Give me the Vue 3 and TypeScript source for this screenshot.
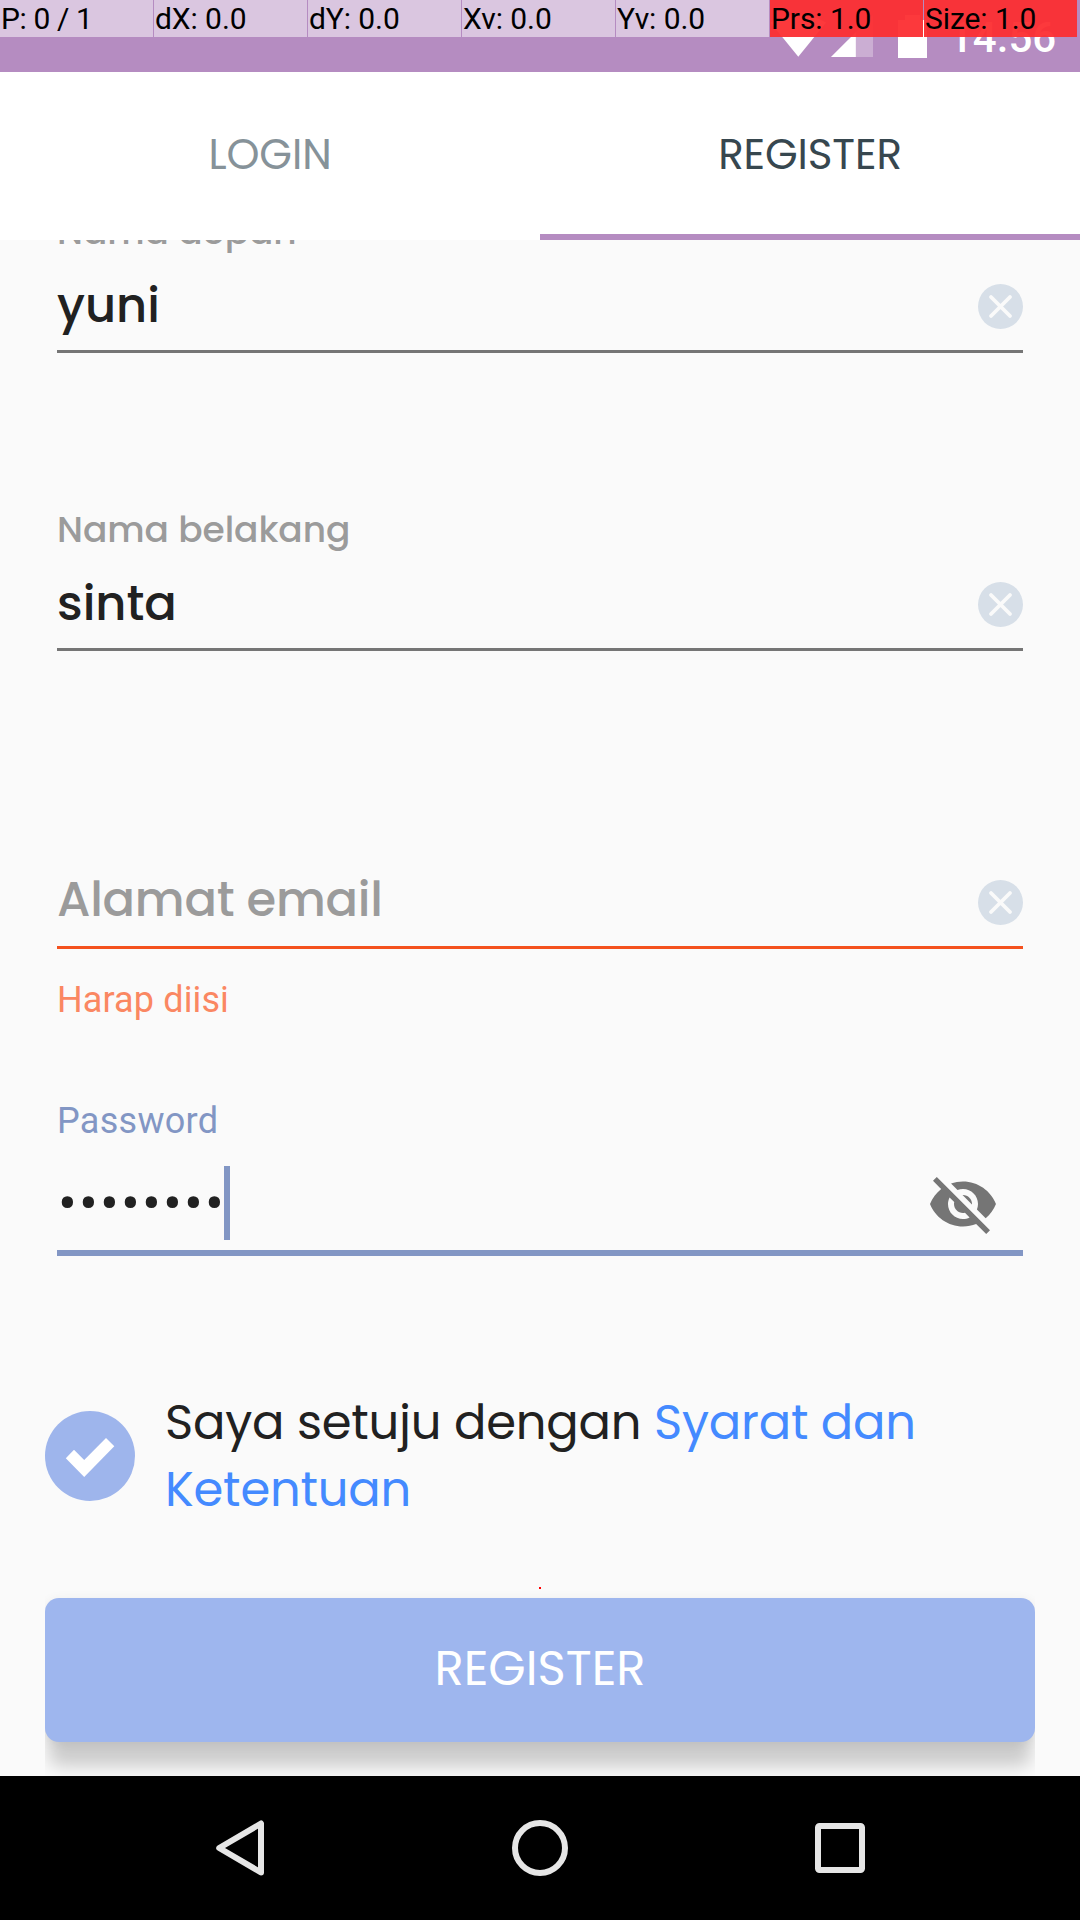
<script setup lang="ts">
interface Cell { text: string; hot?: boolean }
interface Field { label: string; value: string; empty?: boolean; error?: string }

const cells: Cell[] = [
  { text: 'P: 0 / 1' },
  { text: 'dX: 0.0' },
  { text: 'dY: 0.0' },
  { text: 'Xv: 0.0' },
  { text: 'Yv: 0.0' },
  { text: 'Prs: 1.0', hot: true },
  { text: 'Size: 1.0', hot: true },
]

const fields: Field[] = [
  { label: 'Nama depan', value: 'yuni' },
  { label: 'Nama belakang', value: 'sinta' },
  { label: '', value: 'Alamat email', empty: true, error: 'Harap diisi' },
]
</script>

<template>
  <div class="screen">
    <header class="status">
      <svg class="status-icons" width="180" height="72" viewBox="760 0 180 72">
        <path d="M798.3 56.8 770.5 22.5Q798.3 7 826 22.5Z" fill="#fff" />
        <path d="M873 15V57H831Z" fill="#fff" fill-opacity=".3" />
        <path d="M855.8 32.2V57H831Z" fill="#fff" />
        <path d="M898 20H905V15H920V20H927V58H898Z" fill="#fff" />
      </svg>
      <span class="clock">14.56</span>
      <div class="pointer-bar">
        <span v-for="c in cells" :key="c.text" class="cell" :class="{ hot: c.hot }">{{ c.text }}</span>
      </div>
    </header>

    <nav class="tabs">
      <div class="tab">LOGIN</div>
      <div class="tab active">REGISTER</div>
    </nav>

    <main class="form">
      <section v-for="f in fields" :key="f.value" class="field" :class="{ invalid: f.error }">
        <div class="label">{{ f.label }}</div>
        <div class="row">
          <span class="value" :class="{ placeholder: f.empty }">{{ f.value }}</span>
          <svg class="clear" width="45" height="45" viewBox="0 0 45 45">
            <circle cx="22.5" cy="22.5" r="22.5" fill="#d7dfe8" />
            <path d="M13 13 32 32M32 13 13 32" stroke="#fafafa" stroke-width="3.8" stroke-linecap="round" />
          </svg>
        </div>
        <div v-if="f.error" class="error">{{ f.error }}</div>
      </section>

      <section class="password">
        <div class="label">Password</div>
        <div class="row">
          <span class="dots">••••••••</span>
          <i class="caret"></i>
          <svg class="eye" width="72" height="72" viewBox="0 0 24 24">
            <path fill="#757575" d="M12 7c2.76 0 5 2.24 5 5 0 .65-.13 1.26-.36 1.83l2.92 2.92c1.51-1.26 2.7-2.89 3.43-4.75-1.73-4.39-6-7.5-11-7.5-1.4 0-2.74.25-3.98.7l2.16 2.16C10.74 7.13 11.35 7 12 7zM2 4.27l2.28 2.28.46.46C3.08 8.3 1.78 10.02 1 12c1.73 4.39 6 7.5 11 7.5 1.55 0 3.03-.3 4.38-.84l.42.42L19.73 22 21 20.73 3.27 3 2 4.27zM7.53 9.8l1.55 1.55c-.05.21-.08.43-.08.65 0 1.66 1.34 3 3 3 .22 0 .44-.03.65-.08l1.55 1.55c-.67.33-1.41.53-2.2.53-2.76 0-5-2.24-5-5 0-.79.2-1.53.53-2.2zm4.31-.78l3.15 3.15.02-.16c0-1.66-1.34-3-3-3l-.17.01z" />
          </svg>
        </div>
      </section>

      <section class="terms">
        <svg width="90" height="90" viewBox="0 0 90 90">
          <circle cx="45" cy="45" r="45" fill="#9eb5ec" />
          <path d="M20.8 47.3 29 38.7 39.2 48.9 61 27 69.3 35.3 39.2 66Z" fill="#fff" />
        </svg>
        <p class="terms-text">Saya setuju dengan <a>Syarat dan<br />Ketentuan</a></p>
      </section>

      <i class="marker"></i>

      <div class="submit-clip">
        <button class="submit">REGISTER</button>
      </div>
    </main>

    <footer class="navbar">
      <svg width="60" height="60" viewBox="0 0 60 60"><path d="M51 5.5V54.5L9.2 30Z" /></svg>
      <svg width="60" height="60" viewBox="0 0 60 60"><circle cx="30" cy="30" r="25" /></svg>
      <svg width="60" height="60" viewBox="0 0 60 60"><rect x="8" y="8" width="44" height="44" rx="1.5" /></svg>
    </footer>
  </div>
</template>

<style>
body {
  margin: 0;
}
</style>

<style scoped>
.screen {
  width: 1080px;
  height: 1920px;
  overflow: hidden;
  display: flex;
  flex-direction: column;
  background: #fafafa;
  color: #212121;
  font-family: Poppins, Inter, "Noto Sans", sans-serif;
  font-feature-settings: "cv11" 1;
  white-space: nowrap;
}
.status {
  position: relative;
  height: 72px;
  flex: none;
  background: #b58cc1;
  display: flex;
  justify-content: flex-end;
}
.clock {
  width: 131px;
  margin-left: 9px;
  font: 500 42px/76px Roboto, sans-serif;
  color: #fff;
}
.pointer-bar {
  position: absolute;
  top: 0;
  left: 0;
  display: flex;
  gap: 1px;
}
.cell {
  width: 152px;
  height: 37px;
  padding-left: 1px;
  background: rgba(255, 255, 255, 0.5);
  font: 400 30px/37px Roboto, sans-serif;
  letter-spacing: -0.08px;
  color: #000;
}
.cell:first-child {
  letter-spacing: -0.4px;
}
.cell.hot {
  background: rgba(252, 46, 50, 0.95);
}
.tabs {
  display: flex;
  height: 168px;
  flex: none;
  background: #fff;
}
.tab {
  flex: 1;
  box-sizing: border-box;
  height: 168px;
  text-align: center;
  font-size: 42px;
  line-height: 165px;
  letter-spacing: -0.1px;
  color: #869299;
}
.tab.active {
  color: #37474f;
  border-bottom: 6px solid #b58cc1;
}
.form {
  height: 1536px;
  flex: none;
  overflow: hidden;
  display: flex;
  flex-direction: column;
}
.field {
  height: 298px;
  flex: none;
  margin: 0 57px;
}
.field:first-child {
  margin-top: -30px;
}
.field.invalid {
  height: 294px;
}
.label {
  height: 42px;
  font-size: 36px;
  line-height: 43px;
  letter-spacing: -0.07px;
  font-weight: 500;
  color: #9b9b9b;
}
.row {
  display: flex;
  justify-content: space-between;
  align-items: center;
}
.field .row {
  height: 98px;
  padding-top: 11px;
  box-sizing: border-box;
  box-shadow: 0 3px 0 #757575;
}
.field.invalid .row {
  box-shadow: 0 3px 0 #f4511e;
}
.value {
  font-size: 48px;
  line-height: 61px;
  padding-bottom: 2px;
  font-weight: 500;
}
.value.placeholder {
  padding-bottom: 6px;
  letter-spacing: -0.27px;
  color: #9b9b9b;
}
.error {
  margin-top: 34px;
  font: 400 36px/40px Roboto, sans-serif;
  letter-spacing: 0.12px;
  color: #fa8762;
}
.password {
  flex: none;
  height: 156px;
  margin: 0 57px;
}
.password .label {
  font: 400 36px/42px Roboto, sans-serif;
  letter-spacing: 0.28px;
  color: #8296c4;
}
.password .row {
  height: 114px;
  box-sizing: border-box;
  border-bottom: 6px solid #8296c4;
  justify-content: flex-start;
}
.dots {
  width: 166px;
  margin: 15px 0 0 1px;
  font: 400 56px/60px Roboto, sans-serif;
  letter-spacing: 2.1px;
}
.caret {
  width: 6px;
  height: 74px;
  margin-top: 14px;
  background: #8296c4;
}
.eye {
  margin: 16px 24px 0 auto;
}
.terms {
  flex: none;
  display: flex;
  align-items: center;
  gap: 30px;
  margin: 133px 45px 0;
}
.terms-text {
  margin: 0;
  font-size: 48px;
  line-height: 67px;
  letter-spacing: -0.2px;
}
a {
  color: #448aff;
}
.marker {
  flex: none;
  width: 2px;
  height: 2px;
  margin: 64px auto 0;
  background: #f00;
}
.submit-clip {
  flex: none;
  height: 187px;
  margin: 0 45px;
  padding-top: 9px;
  box-sizing: border-box;
  overflow: hidden;
}
.submit {
  display: block;
  width: 100%;
  height: 144px;
  padding: 0 0 3px;
  border: 0;
  border-radius: 14px;
  background: #9eb6ee;
  box-shadow: 0 28px 18px -4px rgba(0, 0, 0, 0.19), 0 2px 12px rgba(0, 0, 0, 0.07);
  font: 400 48px/141px Poppins, Inter, sans-serif;
  color: #fff;
}
.navbar {
  flex: none;
  height: 144px;
  display: flex;
  justify-content: center;
  align-items: center;
  gap: 240px;
  background: #000;
}
.navbar svg {
  fill: none;
  stroke: #e6e6e6;
  stroke-width: 6;
  stroke-linejoin: round;
}
</style>
